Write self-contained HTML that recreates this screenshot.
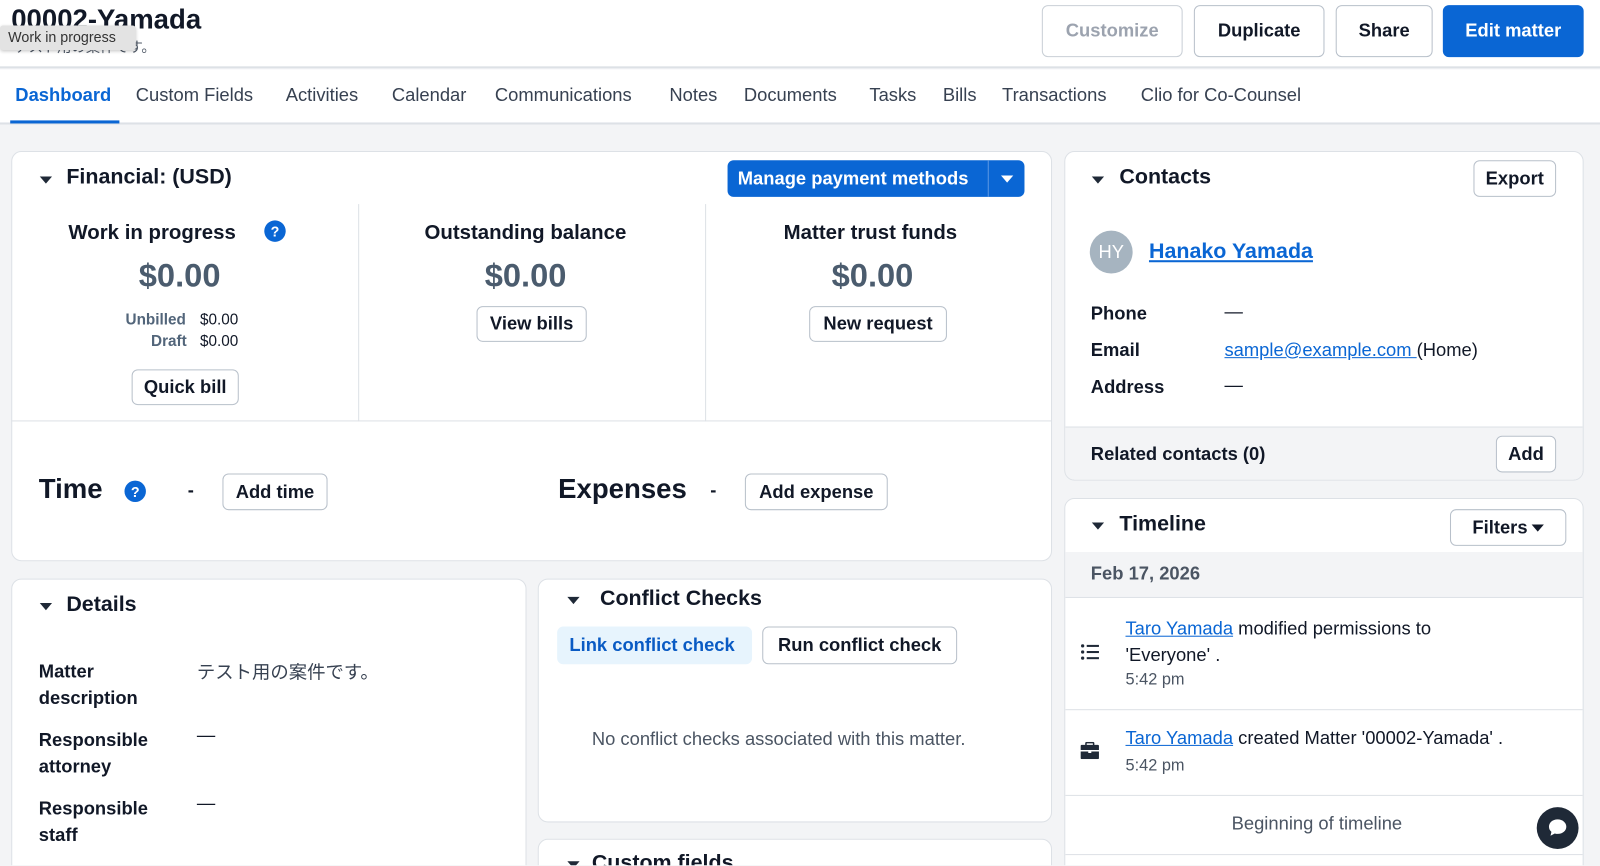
<!DOCTYPE html>
<html style="overflow:hidden;height:866px"><head><meta charset="utf-8"><style>
*{box-sizing:border-box;margin:0;padding:0}
body{width:1600px;height:866px;overflow:hidden;background:#f3f4f6;font-family:"Liberation Sans","Noto Sans CJK JP",sans-serif;color:#111827;position:relative}
#w{position:absolute;left:0;top:0;width:1568px;height:848px;overflow:hidden;transform:scale(1.0204);transform-origin:0 0}
.a{position:absolute;white-space:nowrap}
.card{position:absolute;background:#fff;border:1px solid #dde1e6;border-radius:10px}
.btn{position:absolute;background:#fff;border:1.5px solid #b8c0ca;border-radius:6px;font-weight:bold;font-size:18px;color:#111827;display:flex;align-items:center;justify-content:center}
.h{font-weight:bold;font-size:21px;color:#111827}
.tri{position:absolute;width:0;height:0;border-left:6px solid transparent;border-right:6px solid transparent;border-top:7px solid #1f2937}
.q{position:absolute;width:21px;height:21px;border-radius:50%;background:#0a66d4;color:#fff;font-weight:bold;font-size:14px;display:flex;align-items:center;justify-content:center}
.lbl{font-weight:bold;font-size:18px;color:#111827}
.link{color:#0a66d4;text-decoration:underline}
.mid{color:#4b5563}
</style></head><body><div id="w">
<div class="a" style="left:0;top:0;width:1600px;height:67px;background:#fff;border-bottom:2px solid #dde1e6"></div>
<div class="a" style="left:11px;top:4px;font-size:27px;font-weight:bold;color:#111827">00002-Yamada</div>
<div class="a" style="left:14px;top:36px;font-size:14px;color:#4b5563">テスト用の案件です。</div>
<div class="a" style="left:0;top:25px;width:133px;height:24px;background:#e3e3e3;border-radius:3px;font-size:14px;color:#333;padding:3px 8px;box-shadow:0 1px 3px rgba(0,0,0,.2)">Work in progress</div>
<div class="btn" style="left:1021px;top:5px;width:138px;height:51px;color:#9ca3af;border-color:#c9cfd6">Customize</div>
<div class="btn" style="left:1170px;top:5px;width:128px;height:51px">Duplicate</div>
<div class="btn" style="left:1309px;top:5px;width:95px;height:51px">Share</div>
<div class="btn" style="left:1414px;top:5px;width:138px;height:51px;background:#0a66d4;border-color:#0a66d4;color:#fff">Edit matter</div>
<div class="a" style="left:0;top:68px;width:1600px;height:54px;background:#fff;border-bottom:2px solid #dde1e6"></div>
<div class="a" style="left:15px;top:83px;font-size:18px;font-weight:bold;color:#0a66d4">Dashboard</div>
<div class="a" style="left:10px;top:118px;width:107px;height:3px;background:#0a66d4"></div>
<div class="a mid" style="left:133px;top:83px;font-size:18px;color:#374151">Custom Fields</div>
<div class="a mid" style="left:280px;top:83px;font-size:18px;color:#374151">Activities</div>
<div class="a mid" style="left:384px;top:83px;font-size:18px;color:#374151">Calendar</div>
<div class="a mid" style="left:485px;top:83px;font-size:18px;color:#374151">Communications</div>
<div class="a mid" style="left:656px;top:83px;font-size:18px;color:#374151">Notes</div>
<div class="a mid" style="left:729px;top:83px;font-size:18px;color:#374151">Documents</div>
<div class="a mid" style="left:852px;top:83px;font-size:18px;color:#374151">Tasks</div>
<div class="a mid" style="left:924px;top:83px;font-size:18px;color:#374151">Bills</div>
<div class="a mid" style="left:982px;top:83px;font-size:18px;color:#374151">Transactions</div>
<div class="a mid" style="left:1118px;top:83px;font-size:18px;color:#374151">Clio for Co-Counsel</div>

<div class="card" style="left:11px;top:148px;width:1020px;height:402px"></div>
<div class="tri" style="left:39px;top:173px"></div>
<div class="a h" style="left:65px;top:162px">Financial: (USD)</div>
<div class="a" style="left:713px;top:157px;width:291px;height:36px;background:#0a66d4;border-radius:6px"></div>
<div class="a" style="left:723px;top:165px;color:#fff;font-weight:bold;font-size:18px">Manage payment methods</div>
<div class="a" style="left:968px;top:157px;width:1px;height:36px;background:#5b97e3"></div>
<div class="tri" style="left:981px;top:172px;border-top-color:#fff"></div>
<div class="a" style="left:351px;top:200px;width:1px;height:213px;background:#dde1e6"></div>
<div class="a" style="left:691px;top:200px;width:1px;height:213px;background:#dde1e6"></div>
<div class="a" style="left:11px;top:412px;width:1020px;height:1px;background:#dde1e6"></div>
<div class="a lbl" style="left:67px;top:217px;font-size:20px">Work in progress</div>
<div class="q" style="left:259px;top:216px">?</div>
<div class="a" style="left:136px;top:252px;font-size:32px;font-weight:bold;color:#4b5c6e">$0.00</div>
<div class="a" style="left:123px;top:305px;font-size:15px;font-weight:bold;color:#52657a">Unbilled</div>
<div class="a" style="left:196px;top:305px;font-size:15px">$0.00</div>
<div class="a" style="left:148px;top:326px;font-size:15px;font-weight:bold;color:#52657a">Draft</div>
<div class="a" style="left:196px;top:326px;font-size:15px">$0.00</div>
<div class="btn" style="left:129px;top:362px;width:105px;height:35px">Quick bill</div>
<div class="a lbl" style="left:416px;top:217px;font-size:20px">Outstanding balance</div>
<div class="a" style="left:475px;top:252px;font-size:32px;font-weight:bold;color:#4b5c6e">$0.00</div>
<div class="btn" style="left:467px;top:300px;width:108px;height:35px">View bills</div>
<div class="a lbl" style="left:768px;top:217px;font-size:20px">Matter trust funds</div>
<div class="a" style="left:815px;top:252px;font-size:32px;font-weight:bold;color:#4b5c6e">$0.00</div>
<div class="btn" style="left:793px;top:300px;width:135px;height:35px">New request</div>
<div class="a" style="left:38px;top:464px;font-size:27px;font-weight:bold">Time</div>
<div class="q" style="left:122px;top:471px">?</div>
<div class="a" style="left:184px;top:470px;font-size:18px;font-weight:bold">-</div>
<div class="btn" style="left:218px;top:464px;width:103px;height:36px">Add time</div>
<div class="a" style="left:547px;top:464px;font-size:27px;font-weight:bold">Expenses</div>
<div class="a" style="left:696px;top:470px;font-size:18px;font-weight:bold">-</div>
<div class="btn" style="left:730px;top:464px;width:140px;height:36px">Add expense</div>

<div class="card" style="left:11px;top:567px;width:505px;height:320px"></div>
<div class="tri" style="left:39px;top:591px"></div>
<div class="a h" style="left:65px;top:581px">Details</div>
<div class="a lbl" style="left:38px;top:645px;line-height:26px">Matter<br>description</div>
<div class="a" style="left:193px;top:645px;font-size:18px;color:#374151">テスト用の案件です。</div>
<div class="a lbl" style="left:38px;top:712px;line-height:26px">Responsible<br>attorney</div>
<div class="a" style="left:193px;top:710px;font-size:18px">—</div>
<div class="a lbl" style="left:38px;top:779px;line-height:26px">Responsible<br>staff</div>
<div class="a" style="left:193px;top:777px;font-size:18px">—</div>

<div class="card" style="left:527px;top:567px;width:504px;height:239px"></div>
<div class="tri" style="left:556px;top:585px"></div>
<div class="a h" style="left:588px;top:575px">Conflict Checks</div>
<div class="a" style="left:546px;top:614px;width:191px;height:37px;background:#e7f4fd;border-radius:6px"></div>
<div class="a" style="left:558px;top:622px;font-size:18px;font-weight:bold;color:#0a5bc4">Link conflict check</div>
<div class="btn" style="left:747px;top:614px;width:191px;height:37px">Run conflict check</div>
<div class="a" style="left:580px;top:714px;font-size:18px;color:#4b5563">No conflict checks associated with this matter.</div>
<div class="card" style="left:527px;top:822px;width:504px;height:80px"></div>
<div class="tri" style="left:556px;top:844px"></div>
<div class="a h" style="left:580px;top:834px">Custom fields</div>

<div class="card" style="left:1043px;top:148px;width:509px;height:323px;overflow:hidden"><div style="position:absolute;left:0;top:269px;width:100%;height:60px;background:#f3f4f6;border-top:1px solid #dde1e6"></div></div>
<div class="tri" style="left:1070px;top:173px"></div>
<div class="a h" style="left:1097px;top:162px">Contacts</div>
<div class="btn" style="left:1444px;top:157px;width:81px;height:36px">Export</div>
<div class="a" style="left:1068px;top:226px;width:42px;height:42px;border-radius:50%;background:#a6b4c0;color:#fff;font-size:18px;display:flex;align-items:center;justify-content:center">HY</div>
<div class="a link" style="left:1126px;top:235px;font-size:21px;font-weight:bold">Hanako Yamada</div>
<div class="a lbl" style="left:1069px;top:297px">Phone</div>
<div class="a" style="left:1200px;top:295px;font-size:18px">—</div>
<div class="a lbl" style="left:1069px;top:333px">Email</div>
<div class="a" style="left:1200px;top:333px;font-size:18px"><span class="link">sample@example.com </span>(Home)</div>
<div class="a lbl" style="left:1069px;top:369px">Address</div>
<div class="a" style="left:1200px;top:367px;font-size:18px">—</div>
<div class="a lbl" style="left:1069px;top:435px">Related contacts (0)</div>
<div class="btn" style="left:1466px;top:427px;width:59px;height:36px">Add</div>

<div class="card" style="left:1043px;top:488px;width:509px;height:400px;overflow:hidden">
<div style="position:absolute;left:0;top:52px;width:100%;height:44px;background:#f3f4f6"></div>
<div style="position:absolute;left:0;top:96px;width:100%;height:1px;background:#dde1e6"></div>
<div style="position:absolute;left:0;top:206px;width:100%;height:1px;background:#dde1e6"></div>
<div style="position:absolute;left:0;top:290px;width:100%;height:1px;background:#dde1e6"></div>
<div style="position:absolute;left:0;top:348px;width:100%;height:1px;background:#dde1e6"></div>
</div>
<div class="tri" style="left:1070px;top:512px"></div>
<div class="a h" style="left:1097px;top:502px">Timeline</div>
<div class="btn" style="left:1421px;top:499px;width:114px;height:36px">Filters <span style="display:inline-block;margin-left:4px;width:0;height:0;border-left:6px solid transparent;border-right:6px solid transparent;border-top:7px solid #111827"></span></div>
<div class="a" style="left:1069px;top:552px;font-size:18px;font-weight:bold;color:#4b5563">Feb 17, 2026</div>
<svg class="a" style="left:1059px;top:631px" width="18" height="16" viewBox="0 0 18 16"><g fill="#1f2937"><circle cx="2" cy="2" r="1.6"/><circle cx="2" cy="8" r="1.6"/><circle cx="2" cy="14" r="1.6"/><rect x="6" y="1" width="12" height="2"/><rect x="6" y="7" width="12" height="2"/><rect x="6" y="13" width="12" height="2"/></g></svg>
<div class="a" style="left:1103px;top:603px;font-size:18px;line-height:26px"><span class="link">Taro Yamada</span> modified permissions to<br>'Everyone' .</div>
<div class="a" style="left:1103px;top:658px;font-size:16px;color:#4b5563">5:42 pm</div>
<svg class="a" style="left:1059px;top:727px" width="18" height="17" viewBox="0 0 18 17"><path fill="#1f2937" d="M6 0h6a1.5 1.5 0 0 1 1.5 1.5V3H17a1 1 0 0 1 1 1v4H0V4a1 1 0 0 1 1-1h3.5V1.5A1.5 1.5 0 0 1 6 0zm0 1.5V3h6V1.5zM0 9.5h7.5V11h3V9.5H18V16a1 1 0 0 1-1 1H1a1 1 0 0 1-1-1z"/></svg>
<div class="a" style="left:1103px;top:713px;font-size:18px"><span class="link">Taro Yamada</span> created Matter '00002-Yamada' .</div>
<div class="a" style="left:1103px;top:742px;font-size:16px;color:#4b5563">5:42 pm</div>
<div class="a" style="left:1207px;top:797px;font-size:18px;color:#4b5563">Beginning of timeline</div>
<div class="a" style="left:1506px;top:791px;width:41px;height:41px;border-radius:50%;background:#1f2937"></div>
<svg class="a" style="left:1515px;top:800px" width="23" height="23" viewBox="0 0 23 23"><path fill="#fff" d="M11.5 3C6.5 3 3 6.2 3 10.2c0 2 .9 3.7 2.4 5L4.5 19l4.2-2.2c.9.3 1.9.4 2.8.4 5 0 8.5-3.2 8.5-7S16.5 3 11.5 3z"/></svg>
</div></body></html>
